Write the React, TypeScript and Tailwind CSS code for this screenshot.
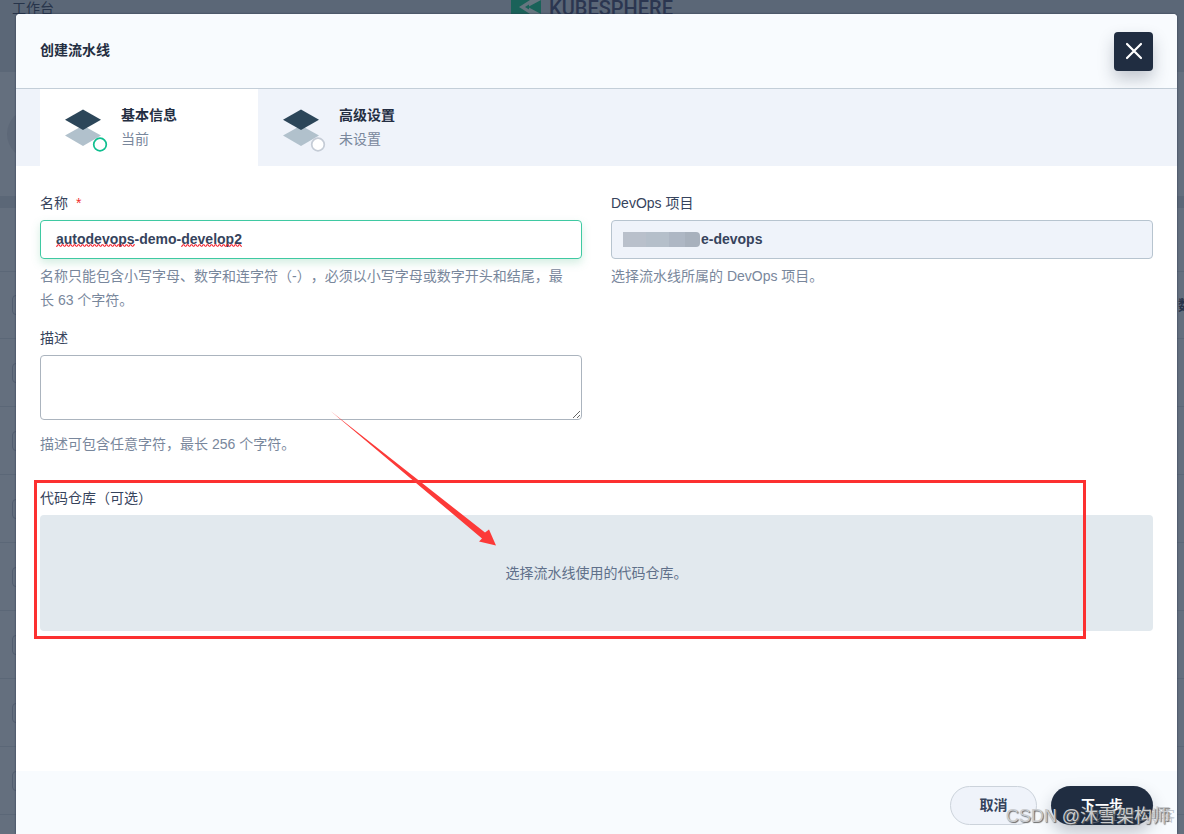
import { useState } from "react";

const rowKeys = ["r1", "r2", "r3", "r4", "r5", "r6", "r7", "r8"];

const steps = [
  { title: "基本信息", status: "当前", active: true },
  { title: "高级设置", status: "未设置", active: false },
];

function StepIcon({ active }: { active: boolean }) {
  return (
    <svg width="48" height="48" viewBox="0 0 48 48" className="overflow-visible" aria-hidden="true">
      <path d="M24 22.5 42 32.5 24 43 6 32.5Z" fill="#b1c1cc" />
      <path d="M24 6.5 42 16.8 24 27 6 16.8Z" fill="#2c4659" />
      <circle
        cx="41"
        cy="41.5"
        r="6.3"
        fill="#fff"
        stroke={active ? "#0fbf8f" : "#c5ccd6"}
        strokeWidth="1.7"
      />
    </svg>
  );
}

// Red wave that marks a misspelled word
function Squiggle({ width }: { width: number }) {
  return (
    <svg width={width} height="3" aria-hidden="true">
      <defs>
        <pattern id={`wave-${width}`} width="4" height="3" patternUnits="userSpaceOnUse">
          <path d="M0 2.2 1 2.2 2 0.8 3 0.8 4 2.2" stroke="#f5222d" strokeWidth="1.1" fill="none" />
        </pattern>
      </defs>
      <rect width={width} height="3" fill={`url(#wave-${width})`} />
    </svg>
  );
}

// The pipelines list that stays visible, dimmed, around the dialog
function Backdrop() {
  return (
    <div className="absolute inset-0 overflow-hidden bg-[#646f7e]" aria-hidden="true">
      <div className="h-[72px] bg-[#5b6777]">
        <div className="grid h-4 grid-cols-[1fr_auto_1fr] grid-rows-[16px] items-center">
          <span className="pl-3 text-[14px] text-[#27344a]">工作台</span>
          <div className="flex items-center gap-2">
            <svg width="30" height="30" viewBox="0 0 30 30">
              <path d="M0 0H30V30H0Z" fill="#1a6259" />
              <path d="M8 14 19 7H30L17 14 30 21H19Z" fill="#66757f" />
              <path d="M14 14 18 11.5V16.5Z" fill="#1a6259" />
            </svg>
            <span className="font-[Roboto,sans-serif] text-[20px] font-medium text-[#2b3650]">
              KUBESPHERE
            </span>
          </div>
        </div>
      </div>
      <div className="flex h-[124px] items-center">
        <span className="ml-[7px] size-[50px] rounded-full bg-[#5d6878]" />
      </div>
      <div className="h-3 bg-[#5b6777]" />
      <div className="h-[64px] border-b border-[#5b6777]" />
      <div className="flex h-[67px] items-center justify-between border-b border-[#5b6777]">
        <span className="ml-3 size-5 rounded-sm border border-[#525e70]" />
        <span className="-mr-2 text-[14px] font-bold text-[#27344a]">数</span>
      </div>
      {rowKeys.map((key) => (
        <div key={key} className="flex h-[68px] items-center border-b border-[#5b6777]">
          <span className="ml-3 size-5 rounded-sm border border-[#525e70]" />
        </div>
      ))}
    </div>
  );
}

export default function App() {
  const [name, setName] = useState("autodevops-demo-develop2");
  const [description, setDescription] = useState("");

  return (
    <div
      lang="zh-CN"
      className="relative flex min-h-screen flex-col overflow-hidden font-['Liberation_Sans','Noto_Sans_CJK_SC',sans-serif] text-[14px] leading-6 text-[#36435c] [text-spacing-trim:space-all]"
    >
      <Backdrop />

      <div
        role="dialog"
        aria-labelledby="dialog-title"
        className="relative ml-4 mr-[7px] mt-[14px] flex flex-1 flex-col overflow-hidden rounded-t-[4px] bg-white shadow-[0_0_2px_#26334a]"
      >
        <header className="flex h-[75px] items-center justify-between border-b border-[#c3ced8] bg-[#f8fbfe] px-6">
          <h1 id="dialog-title" className="pb-[2px] text-[14px] font-bold text-[#242e42]">
            创建流水线
          </h1>
          <button
            type="button"
            aria-label="关闭"
            className="flex size-[39px] items-center justify-center rounded-[4px] bg-[#202d41] shadow-[0_8px_16px_rgba(36,46,66,0.25)]"
          >
            <svg width="18" height="18" viewBox="0 0 18 18" aria-hidden="true">
              <path d="M2 2 16 16M16 2 2 16" stroke="#fff" strokeWidth="2.2" strokeLinecap="round" />
            </svg>
          </button>
        </header>

        <nav className="flex bg-[#eff3fa] px-6">
          {steps.map((step) => (
            <button
              key={step.title}
              type="button"
              aria-current={step.active ? "step" : undefined}
              className={`flex h-[77px] w-[218px] items-center gap-[14px] px-[19px] pb-[2px] text-left ${
                step.active ? "bg-white" : ""
              }`}
            >
              <StepIcon active={step.active} />
              <span className="flex flex-col">
                <span className="font-bold text-[#242e42]">{step.title}</span>
                <span className="text-[#79879c]">{step.status}</span>
              </span>
            </button>
          ))}
        </nav>

        <main className="flex-1 px-6 pt-[25px]">
          <div className="grid grid-cols-2 gap-x-[29px] gap-y-[14px]">
            <div>
              <label htmlFor="name" className="block">
                名称 <span className="ml-1 text-[#f02d2d]">*</span>
              </label>
              <div className="relative mt-[5px]">
                <input
                  id="name"
                  value={name}
                  spellCheck={false}
                  onChange={(e) => setName(e.target.value)}
                  className="block h-[39px] w-full rounded-[4px] border border-[#3fc9a2] px-[15px] pb-[2px] font-bold text-[#36435c] shadow-[0_4px_8px_rgba(85,188,138,0.25)] outline-none"
                />
                <div className="pointer-events-none absolute left-4 top-6 flex gap-[46px]">
                  <Squiggle width={79} />
                  <Squiggle width={61} />
                </div>
              </div>
              <p className="mt-[5px] text-[#79879c]">
                名称只能包含小写字母、数字和连字符（-），必须以小写字母或数字开头和结尾，最
                <br />长 63 个字符。
              </p>
            </div>

            <div>
              <label htmlFor="project" className="block">
                DevOps 项目
              </label>
              <div className="relative mt-[5px]">
                <input
                  id="project"
                  readOnly
                  value="e-devops"
                  className="block h-[39px] w-full rounded-[4px] border border-[#b7c4cf] bg-[#eff3fa] pb-[2px] pl-[89px] pr-4 font-bold text-[#36435c] outline-none"
                />
                <div className="absolute left-3 top-3 flex h-[15px] w-[77px] overflow-hidden rounded-r-sm">
                  <span className="flex-[3] bg-[#b9c0cb]" />
                  <span className="flex-[3] bg-[#b5bfca]" />
                  <span className="flex-[2] bg-[#aeb7c4]" />
                  <span className="flex-[2] bg-[#a8b1bd]" />
                </div>
              </div>
              <p className="mt-[5px] text-[#79879c]">选择流水线所属的 DevOps 项目。</p>
            </div>

            <div>
              <label htmlFor="description" className="block">
                描述
              </label>
              <textarea
                id="description"
                value={description}
                onChange={(e) => setDescription(e.target.value)}
                className="mt-[5px] block h-[65px] w-full resize rounded-[4px] border border-[#abb4be] px-4 py-2 outline-none"
              />
              <p className="mt-3 text-[#79879c]">描述可包含任意字符，最长 256 个字符。</p>
            </div>
          </div>

          <div className="relative mt-[30px]">
            <span id="repo-label" className="block">
              代码仓库（可选）
            </span>
            <button
              type="button"
              aria-labelledby="repo-label"
              className="mt-[5px] flex h-[116px] w-full items-center justify-center rounded-[4px] bg-[#e2e9ee] text-[#5f708a]"
            >
              选择流水线使用的代码仓库。
            </button>

            {/* Red marker box and arrow lying over the repository field */}
            <div className="pointer-events-none absolute -left-[6px] -top-[6px] bottom-[-8px] right-[67px] border-3 border-[#fc3030]" />
            <svg
              width="170"
              height="140"
              viewBox="0 0 170 140"
              className="pointer-events-none absolute -top-[78px] left-[288px]"
              aria-hidden="true"
            >
              <path d="M2.5 3 157 124.5 161 121.5 168 137.5 151 133.5 154 130.5Z" fill="#fc3a38" />
            </svg>
          </div>
        </main>

        <footer className="flex h-[63px] items-start justify-end gap-[14px] bg-[#f8fbfe] px-6 pt-[15px]">
          <button
            type="button"
            className="h-[39px] w-[87px] rounded-full border border-[#ccd3db] bg-[#eff3fa] pb-[2px] font-bold text-[#36435c]"
          >
            取消
          </button>
          <button
            type="button"
            className="h-[39px] w-[102px] rounded-full bg-[#202d41] pb-[2px] font-bold text-white shadow-[0_8px_16px_rgba(36,46,66,0.25)]"
          >
            下一步
          </button>
        </footer>
      </div>

      {/* Watermarks: a faint one under the main one */}
      <div className="pointer-events-none absolute bottom-1 right-[9px] text-[14px] leading-7 text-[#8a93a0]/50">
        @51CTO博客
      </div>
      <div className="pointer-events-none absolute bottom-1 right-[14px] text-[18px] leading-7 text-[#c9cbce] [text-shadow:1px_1px_1px_#666]">
        CSDN @沐雪架构师
      </div>
    </div>
  );
}
